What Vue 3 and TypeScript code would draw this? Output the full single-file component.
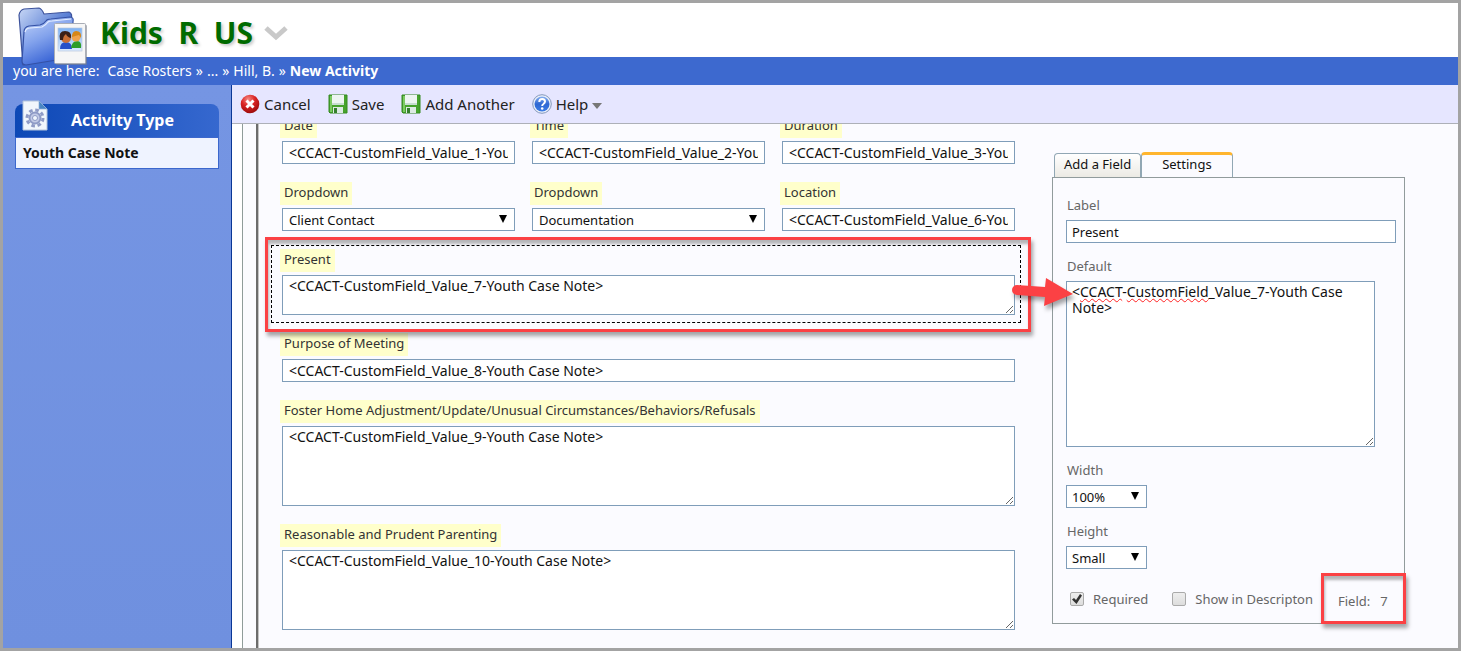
<script setup lang="ts">
import { reactive, ref } from 'vue'

interface FormField {
  id: number
  label: string
  kind: 'text' | 'select' | 'area'
  value: string
  rows?: 'short' | 'tall'
  selected?: boolean
}

const note = (n: number): string => `<CCACT-CustomField_Value_${n}-Youth Case Note>`

const fields = reactive<FormField[]>([
  { id: 1, label: 'Date', kind: 'text', value: note(1) },
  { id: 2, label: 'Time', kind: 'text', value: note(2) },
  { id: 3, label: 'Duration', kind: 'text', value: note(3) },
  { id: 4, label: 'Dropdown', kind: 'select', value: 'Client Contact' },
  { id: 5, label: 'Dropdown', kind: 'select', value: 'Documentation' },
  { id: 6, label: 'Location', kind: 'text', value: note(6) },
  { id: 7, label: 'Present', kind: 'area', value: note(7), rows: 'short', selected: true },
  { id: 8, label: 'Purpose of Meeting', kind: 'text', value: note(8) },
  {
    id: 9,
    label: 'Foster Home Adjustment/Update/Unusual Circumstances/Behaviors/Refusals',
    kind: 'area',
    value: note(9),
    rows: 'tall',
  },
  { id: 10, label: 'Reasonable and Prudent Parenting', kind: 'area', value: note(10), rows: 'tall' },
])

const settings = reactive({
  label: 'Present',
  fallback: note(7),
  width: '100%',
  height: 'Small',
  required: true,
  describe: false,
})

const activeTab = ref<'add' | 'settings'>('settings')
</script>

<template>
  <div class="app">
    <header class="banner">
      <svg class="folder" viewBox="0 0 70 62" aria-hidden="true">
        <defs>
          <linearGradient id="fBack" x1="0" y1="0" x2="1" y2="1">
            <stop offset="0" stop-color="#c9d8f6" />
            <stop offset="0.5" stop-color="#5d82d6" />
            <stop offset="1" stop-color="#3058c0" />
          </linearGradient>
          <linearGradient id="fFront" x1="0" y1="0" x2="0.5" y2="1">
            <stop offset="0" stop-color="#c4d5fa" />
            <stop offset="0.5" stop-color="#82a2ec" />
            <stop offset="1" stop-color="#3460d4" />
          </linearGradient>
          <linearGradient id="photo" x1="0" y1="0" x2="0" y2="1">
            <stop offset="0" stop-color="#7db1f2" />
            <stop offset="1" stop-color="#dcecff" />
          </linearGradient>
        </defs>
        <path d="M1 10 Q2 5 6 4 L21 3 Q24 4 26 9 L51 7 Q55 9 53 14 L53 50 L5 60 Z" fill="url(#fBack)" stroke="#3d539c" stroke-width="1.200" stroke-linejoin="round" />
        <path d="M6 27 Q6 22 11 21 L22 20 Q26 19 28 16 Q29 14 33 14 L52 12 Q56 12 55 17 L52 50 Q50 54 45 54 L8 60 Q4 60 4 56 Z" fill="url(#fFront)" stroke="#3451a5" stroke-width="1.200" />
        <path d="M7 27 Q8 23 12 23 L24 22 Q28 20 30 17 Q31 16 34 16 L53 14" fill="none" stroke="#e4edff" stroke-width="1.2" />
        <rect x="38" y="20" width="31" height="40" rx="1" fill="#7b808b" opacity="0.6" />
        <rect x="36.500" y="18.500" width="31" height="40" rx="1" fill="#f6f6f6" stroke="#a9adb6" />
        <rect x="40" y="23" width="24" height="23" fill="url(#photo)" stroke="#b8c7dc" stroke-width="0.700" />
        <path d="M42 44 Q42 37 48 37 Q54 37 54 44 Z" fill="#2550c8" />
        <path d="M53 43 Q54 36 59 36 Q64 36 63 43 Z" fill="#2d9d29" />
        <circle cx="48" cy="33" r="5" fill="#c96f35" />
        <path d="M42 35 Q40 26 47 26 Q54 26 53 33 Q49 32 48 29 Q45 31 45 35 Z" fill="#3a2018" />
        <circle cx="58" cy="32" r="4.500" fill="#f0a44c" />
        <path d="M54 32 Q54 26 58 26 Q64 26 63 33 L61 30 Q57 31 54 32 Z" fill="#d68718" />
      </svg>
      <h1>Kids&nbsp; R&nbsp; US</h1>
      <button class="chevron" type="button" aria-label="Switch program">
        <svg width="26" height="18" viewBox="0 0 26 18"><path d="M3 4 L13 13 L23 4" fill="none" stroke="#c9c9c9" stroke-width="5" /></svg>
      </button>
    </header>

    <nav class="crumbs" aria-label="Breadcrumb">
      <span class="here">you are here:</span>
      <a href="#rosters">Case Rosters</a><i>»</i><a href="#more">...</a><i>»</i><a href="#hill">Hill, B.</a><i>»</i><strong>New Activity</strong>
    </nav>

    <div class="body">
      <aside class="side">
        <section class="card">
          <h2>
            <svg class="gearpage" viewBox="0 0 26 31" aria-hidden="true">
              <path d="M1 1 H17 L25 9 V30 H1 Z" fill="#f1f6fc" stroke="#b3c3db" />
              <path d="M17 1 L25 9 H17 Z" fill="#4a86c4" stroke="#8fb0d8" stroke-width="0.700" />
              <circle cx="13" cy="18" r="8" fill="none" stroke="#8f9bc6" stroke-width="3" stroke-dasharray="3.600 2.683" />
              <circle cx="13" cy="18" r="5.500" fill="#c3cbe6" stroke="#8f9bc6" stroke-width="2" />
              <circle cx="13" cy="18" r="2.500" fill="#f1f6fc" stroke="#8f9bc6" />
            </svg>
            Activity Type
          </h2>
          <a class="entry" href="#youth">Youth Case Note</a>
        </section>
      </aside>

      <main class="main">
        <div class="toolbar">
          <button type="button">
            <svg width="20" height="20" viewBox="0 0 20 20">
              <defs><radialGradient id="red" cx="0.4" cy="0.25" r="0.8"><stop offset="0" stop-color="#f58a83" /><stop offset="0.450" stop-color="#db2525" /><stop offset="1" stop-color="#950808" /></radialGradient></defs>
              <circle cx="10" cy="10" r="9.300" fill="url(#red)" />
              <path d="M6.500 6.500 L13.500 13.500 M13.500 6.500 L6.500 13.500" stroke="#fff" stroke-width="3" />
            </svg>
            Cancel
          </button>
          <button v-for="name in ['Save', 'Add Another']" :key="name" type="button">
            <svg width="20" height="20" viewBox="0 0 20 20">
              <path d="M1 1 H19 V19 H2 L1 18 Z" fill="#46a32c" stroke="#348a20" />
              <path d="M2 2 H4 V18 H2 Z" fill="#7cca62" />
              <rect x="4" y="1" width="12" height="10" fill="#edf5f1" />
              <path d="M4 9 H16 V11 H4 Z" fill="#c6ddd0" />
              <rect x="5" y="13" width="10" height="6" fill="#dceae3" />
              <rect x="6" y="14" width="3" height="5" fill="#347f2b" />
            </svg>
            {{ name }}
          </button>
          <button type="button">
            <svg width="20" height="20" viewBox="0 0 20 20">
              <defs><linearGradient id="blue" x1="0" y1="0" x2="0" y2="1"><stop offset="0" stop-color="#89b1f2" /><stop offset="0.500" stop-color="#2e67d2" /><stop offset="1" stop-color="#3b7ce6" /></linearGradient></defs>
              <circle cx="10" cy="10" r="9.300" fill="#e9eff9" stroke="#8497bb" />
              <circle cx="10" cy="10" r="7.500" fill="url(#blue)" />
              <path d="M7.300 8 Q7.300 5 10.200 5 Q13 5 13 7.600 Q13 9 11.400 10 Q10.200 10.700 10.200 12" fill="none" stroke="#fff" stroke-width="2" />
              <circle cx="10.200" cy="14.500" r="1.300" fill="#fff" />
            </svg>
            Help
            <svg class="caret" width="10" height="6" viewBox="0 0 10 6"><path d="M0 0 H10 L5 6 Z" fill="#777" /></svg>
          </button>
        </div>

        <div class="canvas">
          <div class="sheet">
            <form class="fields" @submit.prevent>
              <div
                v-for="f in fields"
                :key="f.id"
                class="field"
                :class="{ wide: f.id > 6, selected: f.selected }"
              >
                <label :for="`f${f.id}`">{{ f.label }}</label>
                <input v-if="f.kind === 'text'" :id="`f${f.id}`" v-model="f.value" type="text" class="box token" />
                <span v-else-if="f.kind === 'select'" class="pick">
                  <select :id="`f${f.id}`" v-model="f.value" class="box"><option>{{ f.value }}</option></select>
                </span>
                <textarea v-else :id="`f${f.id}`" v-model="f.value" class="box token" :class="f.rows" spellcheck="false"></textarea>
                <template v-if="f.selected">
                  <span class="dashes"></span>
                  <span class="callout around"></span>
                  <svg class="arrow" width="64" height="40" viewBox="0 0 64 40" aria-hidden="true">
                    <path d="M6 10 L34 12 L35 3 L62 19 L33 31 L34 22 L6 20 A5 5 0 0 1 6 10 Z" fill="#fb4144" />
                  </svg>
                </template>
              </div>
            </form>

            <aside class="inspector">
              <div class="tabs" role="tablist">
                <button type="button" role="tab" :class="{ on: activeTab === 'add' }" :aria-selected="activeTab === 'add'" @click="activeTab = 'add'">Add a Field</button>
                <button type="button" role="tab" :class="{ on: activeTab === 'settings' }" :aria-selected="activeTab === 'settings'" @click="activeTab = 'settings'">Settings</button>
              </div>
              <form class="panel" @submit.prevent>
                <label for="s-label">Label</label>
                <input id="s-label" v-model="settings.label" type="text" class="box tight" />
                <label for="s-default">Default</label>
                <div class="spell">
                  <div class="marks" aria-hidden="true">&lt;<u>CCACT</u>-<u>CustomField</u></div>
                  <textarea id="s-default" v-model="settings.fallback" class="box tight token" spellcheck="false"></textarea>
                </div>
                <label for="s-width">Width</label>
                <span class="pick small"><select id="s-width" v-model="settings.width" class="box tight"><option>100%</option></select></span>
                <label for="s-height">Height</label>
                <span class="pick small"><select id="s-height" v-model="settings.height" class="box tight"><option>Small</option></select></span>
                <div class="checks">
                  <label><input v-model="settings.required" type="checkbox" />Required</label>
                  <label><input v-model="settings.describe" type="checkbox" />Show in Descripton</label>
                </div>
                <div class="callout number"><span>Field:</span><span>7</span></div>
              </form>
            </aside>
          </div>
        </div>
      </main>
    </div>
  </div>
</template>

<style>
body {
  margin: 0;
}
</style>

<style scoped>
* {
  box-sizing: border-box;
}
.app {
  display: flex;
  flex-direction: column;
  height: 100vh;
  border: 3px solid #a3a3a3;
  background: #fff;
  font: 13px/18px 'Noto Sans', 'DejaVu Sans', sans-serif;
  color: #111;
  overflow: hidden;
}
button,
input,
select,
textarea {
  font: inherit;
  color: inherit;
}
button {
  border: 0;
  background: none;
  padding: 0;
}
a {
  color: inherit;
  text-decoration: none;
}
.banner {
  position: relative;
  display: flex;
  align-items: center;
  gap: 10px;
  height: 54px;
  flex: none;
  padding: 5px 0 0 97px;
}
.folder {
  position: absolute;
  left: 15px;
  top: 2px;
  width: 70px;
  height: 62px;
}
h1 {
  margin: 0;
  font: bold 30px/36px 'Noto Sans', sans-serif;
  color: #006b00;
  text-shadow: 2px 2px 3px #ccc;
}
.chevron svg {
  display: block;
}
.crumbs {
  display: flex;
  align-items: center;
  gap: 4px;
  height: 28px;
  flex: none;
  padding-left: 10px;
  background: #3d69cf;
  color: #fff;
  font-size: 14px;
}
.here {
  margin-right: 4px;
}
.crumbs i {
  font-style: normal;
}
.body {
  display: flex;
  flex: 1;
  min-height: 0;
}
.side {
  flex: none;
  width: 229px;
  padding: 19px 12px;
  background: linear-gradient(#7595e3, #6f90df);
  border-right: 1px solid #0a3796;
}
.card {
  width: 204px;
}
.card h2 {
  position: relative;
  height: 33px;
  margin: 0;
  padding-left: 56px;
  border-radius: 8px 8px 0 0;
  background: linear-gradient(90deg, #0d48b6, #3668cf);
  color: #fff;
  font-size: 16px;
  line-height: 32px;
}
.gearpage {
  position: absolute;
  left: 7px;
  top: -4px;
  width: 26px;
  height: 31px;
}
.entry {
  display: block;
  height: 32px;
  padding-left: 7px;
  border: 1px solid #3c67cd;
  background: #eff3ff;
  font-size: 14px;
  font-weight: bold;
  line-height: 29px;
}
.main {
  display: flex;
  flex-direction: column;
  flex: 1;
  min-width: 0;
}
.toolbar {
  display: flex;
  align-items: center;
  gap: 17px;
  height: 39px;
  flex: none;
  padding-left: 8px;
  border-bottom: 1px solid #adb0b8;
  background: #e6e6ff;
  color: #222;
  font-size: 15px;
}
.toolbar button {
  display: flex;
  align-items: center;
  gap: 4px;
}
.caret {
  margin-top: 3px;
}
.canvas {
  display: flex;
  flex: 1;
  min-height: 0;
  padding-left: 10px;
  overflow: hidden;
}
.sheet {
  position: relative;
  display: flex;
  flex: 1;
  align-items: flex-start;
  gap: 37px;
  min-width: 0;
  padding: 0 53px 0 39px;
  border-left: 1px solid #8f9c9a;
  background: linear-gradient(90deg, transparent 13px, #6c6c6c 13px, #6c6c6c 15px, #c4c4c4 15px, #c4c4c4 16px, transparent 16px) #fbfbff;
}
.fields {
  display: grid;
  grid-template-columns: repeat(3, minmax(0, 1fr));
  flex: 1;
  gap: 18px 17px;
  min-width: 0;
  margin-top: -9px;
}
.field {
  position: relative;
  display: flex;
  flex-direction: column;
  align-items: flex-start;
  gap: 3px;
}
.wide {
  grid-column: 1 / -1;
}
.field label {
  height: 23px;
  margin-left: -2px;
  padding: 0 4px;
  background: #ffffcb;
  color: #333;
  line-height: 21px;
}
.box {
  display: block;
  width: 100%;
  height: 23px;
  margin: 0;
  padding: 0 6px;
  border: 1px solid #7f9db9;
  border-radius: 0;
  background: #fff;
  appearance: none;
  outline: 0;
}
.box.token {
  font-size: 14px;
}
textarea.box {
  padding-top: 2px;
  line-height: 16px;
}
.box.tight {
  padding-left: 5px;
  padding-right: 5px;
}
.box.short {
  height: 40px;
}
.box.tall {
  height: 80px;
}
.pick {
  position: relative;
  width: 100%;
}
.pick::after {
  content: '';
  position: absolute;
  right: 8px;
  top: 7px;
  border: solid transparent;
  border-width: 8px 4px 0;
  border-top-color: #000;
  pointer-events: none;
}
.pick.small {
  width: 81px;
}
.selected {
  z-index: 1;
}
.dashes {
  position: absolute;
  inset: -4px -6px -8px -11px;
  border: 1px dashed #000;
  pointer-events: none;
}
.callout {
  position: absolute;
  border: 3px solid #fb4144;
  box-shadow: 2px 4px 4px rgba(0, 0, 0, 0.35), inset 1px 4px 3px rgba(0, 0, 0, 0.28);
  pointer-events: none;
}
.around {
  inset: -12px -16px -17px -17px;
}
.arrow {
  position: absolute;
  right: -60px;
  top: 26px;
  filter: drop-shadow(2px 4px 2px rgba(0, 0, 0, 0.35));
  pointer-events: none;
}
.inspector {
  flex: none;
  width: 353px;
  margin-top: 28px;
}
.tabs {
  display: flex;
  align-items: flex-end;
  height: 25px;
  padding-left: 2px;
}
.tabs button {
  height: 24px;
  padding: 0 9px 4px;
  border: 1px solid #91a7b4;
  border-bottom: 0;
  border-radius: 4px 4px 0 0;
  background: linear-gradient(#fff, #eceae4);
  line-height: 18px;
}
.tabs .on {
  position: relative;
  height: 26px;
  margin-bottom: -1px;
  padding: 0 20px 6px;
  border-top: 3px solid #ffb52e;
  background: #fbfbff;
}
.panel {
  position: relative;
  display: flex;
  flex-direction: column;
  align-items: flex-start;
  gap: 6px;
  padding: 18px 8px 15px 13px;
  border: 1px solid #919b9c;
  color: #111;
}
.panel label {
  padding-left: 1px;
  color: #666;
}
.panel > .box + label,
.panel > .spell + label,
.panel > .pick + label {
  margin-top: 8px;
}
.spell {
  position: relative;
  width: 309px;
  background: #fff;
}
.spell .box {
  position: relative;
  height: 166px;
  background: transparent;
}
.marks {
  position: absolute;
  inset: 0;
  padding: 3px 6px;
  color: transparent;
  font-size: 14px;
  line-height: 16px;
}
.marks u {
  text-decoration: underline wavy #f22 1px;
}
.checks {
  display: flex;
  gap: 24px;
  margin-top: 15px;
  padding-left: 4px;
}
.checks label {
  display: flex;
  align-items: center;
  gap: 9px;
  padding: 0;
}
.checks input {
  display: grid;
  place-items: center;
  width: 14px;
  height: 14px;
  margin: 0;
  border: 1px solid #aaa;
  border-radius: 2px;
  background: linear-gradient(#eee, #ddd);
  appearance: none;
}
.checks input:checked::after {
  content: '';
  width: 10px;
  height: 10px;
  background: #333;
  clip-path: polygon(0 55%, 20% 40%, 40% 60%, 80% 0, 100% 15%, 45% 100%);
}
.number {
  right: -2px;
  bottom: -1px;
  display: flex;
  gap: 10px;
  width: 85px;
  height: 51px;
  padding: 16px 0 0 14px;
  color: #666;
}
</style>
